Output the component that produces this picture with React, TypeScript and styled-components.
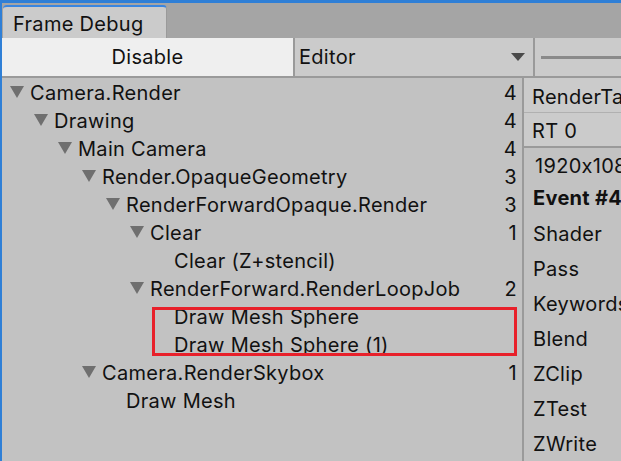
import React from "react";
import styled, { createGlobalStyle } from "styled-components";

const Global = createGlobalStyle`
  html, body { margin: 0; padding: 0; background: #c2c2c2; }
  body { font-family: Inter, "Noto Sans", sans-serif; color: #111; }
`;

const Window = styled.div`
  width: 621px;
  height: 461px;
  box-sizing: border-box;
  border-top: 3px solid #2f7fd6;
  border-left: 2px solid #2f7fd6;
  display: flex;
  flex-direction: column;
  overflow: hidden;
  background: #c2c2c2;
  font-size: 20px;
  letter-spacing: 0.3px;
`;

const TabBar = styled.div`
  height: 35px;
  flex: none;
  background: #a5a5a5;
  display: flex;
  align-items: flex-end;
  padding-left: 1px;
`;

const Tab = styled.div`
  width: 153px;
  height: 29px;
  box-sizing: content-box;
  background: #cbcbcb;
  border-top: 2px solid #3a86e0;
  border-right: 1px solid #9a9a9a;
  border-radius: 4px 4px 0 0;
  padding: 2px 0 0 10px;
  display: flex;
  align-items: center;
`;

const Toolbar = styled.div`
  height: 38px;
  flex: none;
  display: flex;
  background: #cbcbcb;
  border-bottom: 2px solid #9a9a9a;
`;

const ToolButton = styled.div`
  width: 291px;
  background: #efefef;
  border-right: 2px solid #9a9a9a;
  display: flex;
  align-items: center;
  justify-content: center;
`;

const Dropdown = styled.div`
  width: 240px;
  border-right: 2px solid #9a9a9a;
  display: flex;
  align-items: center;
  justify-content: space-between;
  padding: 0 8px 0 4px;
  box-sizing: border-box;
`;

const Arrow = styled.span`
  width: 0;
  height: 0;
  border-left: 7px solid transparent;
  border-right: 7px solid transparent;
  border-top: 8px solid #4a4a4a;
`;

const SliderWrap = styled.div`
  flex: 1;
  display: flex;
  align-items: center;
  padding-left: 6px;
`;

const SliderTrack = styled.div`
  flex: 1;
  height: 3px;
  background: #8a8a8a;
`;

const Main = styled.div`
  flex: 1;
  display: flex;
  min-height: 0;
`;

const Tree = styled.div`
  width: 522px;
  flex: none;
  border-right: 2px solid #9a9a9a;
  padding-top: 1px;
  box-sizing: border-box;
  position: relative;
`;

const Row = styled.div<{ $level: number }>`
  height: 28px;
  display: flex;
  align-items: center;
  padding-left: ${(p) => 7 + p.$level * 24}px;
  padding-right: 5px;
  white-space: nowrap;
`;

const Toggle = styled.span<{ $show: boolean }>`
  width: 21px;
  flex: none;
  display: flex;
  align-items: center;
  &::before {
    content: "";
    display: ${(p) => (p.$show ? "block" : "none")};
    width: 0;
    height: 0;
    border-left: 7px solid transparent;
    border-right: 7px solid transparent;
    border-top: 12px solid #6f6f6f;
    margin-left: 1px;
    margin-top: -2px;
  }
`;

const Label = styled.span`
  flex: 1;
`;

const Count = styled.span`
  flex: none;
`;

const Highlight = styled.div`
  position: absolute;
  left: 150px;
  top: 229px;
  width: 365px;
  height: 49px;
  box-sizing: border-box;
  border: 3px solid #e8202a;
`;

const Side = styled.div`
  flex: 1;
  display: flex;
  flex-direction: column;
  white-space: nowrap;
  overflow: hidden;
`;

const SideHeader = styled.div`
  height: 35px;
  box-sizing: border-box;
  flex: none;
  display: flex;
  align-items: center;
  padding: 3px 0 0 8px;
  background: #cbcbcb;
  border-bottom: 1px solid #b0b0b0;
`;

const SideSection = styled.div`
  height: 35px;
  box-sizing: border-box;
  flex: none;
  display: flex;
  align-items: center;
  padding: 2px 0 0 8px;
  background: #cbcbcb;
  border-bottom: 2px solid #9a9a9a;
`;

const Prop = styled.div<{ $bold?: boolean; $h: number; $indent: number; $lift?: number }>`
  height: ${(p) => p.$h}px;
  box-sizing: border-box;
  flex: none;
  display: flex;
  align-items: center;
  padding-left: ${(p) => p.$indent}px;
  padding-bottom: ${(p) => p.$lift ?? 0}px;
  font-weight: ${(p) => (p.$bold ? 700 : 400)};
`;

type Node = { label: string; level: number; open: boolean; count?: number };

const nodes: Node[] = [
  { label: "Camera.Render", level: 0, open: true, count: 4 },
  { label: "Drawing", level: 1, open: true, count: 4 },
  { label: "Main Camera", level: 2, open: true, count: 4 },
  { label: "Render.OpaqueGeometry", level: 3, open: true, count: 3 },
  { label: "RenderForwardOpaque.Render", level: 4, open: true, count: 3 },
  { label: "Clear", level: 5, open: true, count: 1 },
  { label: "Clear (Z+stencil)", level: 6, open: false },
  { label: "RenderForward.RenderLoopJob", level: 5, open: true, count: 2 },
  { label: "Draw Mesh Sphere", level: 6, open: false },
  { label: "Draw Mesh Sphere (1)", level: 6, open: false },
  { label: "Camera.RenderSkybox", level: 3, open: true, count: 1 },
  { label: "Draw Mesh", level: 4, open: false },
];

const props: { label: string; h: number; bold?: boolean; indent: number; lift?: number }[] = [
  { label: "1920x1080", h: 36, indent: 11 },
  { label: "Event #4", h: 32, bold: true, indent: 9, lift: 4 },
  { label: "Shader", h: 35, indent: 9 },
  { label: "Pass", h: 35, indent: 9 },
  { label: "Keywords", h: 35, indent: 9 },
  { label: "Blend", h: 35, indent: 9 },
  { label: "ZClip", h: 35, indent: 9 },
  { label: "ZTest", h: 35, indent: 9 },
  { label: "ZWrite", h: 35, indent: 9 },
];

export default function App() {
  return (
    <>
      <Global />
      <Window>
        <TabBar>
          <Tab>Frame Debug</Tab>
        </TabBar>
        <Toolbar>
          <ToolButton>Disable</ToolButton>
          <Dropdown>
            <span>Editor</span>
            <Arrow />
          </Dropdown>
          <SliderWrap>
            <SliderTrack />
          </SliderWrap>
        </Toolbar>
        <Main>
          <Tree>
            {nodes.map((n, i) => (
              <Row key={i} $level={n.level}>
                <Toggle $show={n.open} />
                <Label>{n.label}</Label>
                {n.count !== undefined && <Count>{n.count}</Count>}
              </Row>
            ))}
            <Highlight />
          </Tree>
          <Side>
            <SideHeader>RenderTarget</SideHeader>
            <SideSection>RT 0</SideSection>
            {props.map((p) => (
              <Prop key={p.label} $h={p.h} $bold={p.bold} $indent={p.indent} $lift={p.lift}>
                {p.label}
              </Prop>
            ))}
          </Side>
        </Main>
      </Window>
    </>
  );
}
